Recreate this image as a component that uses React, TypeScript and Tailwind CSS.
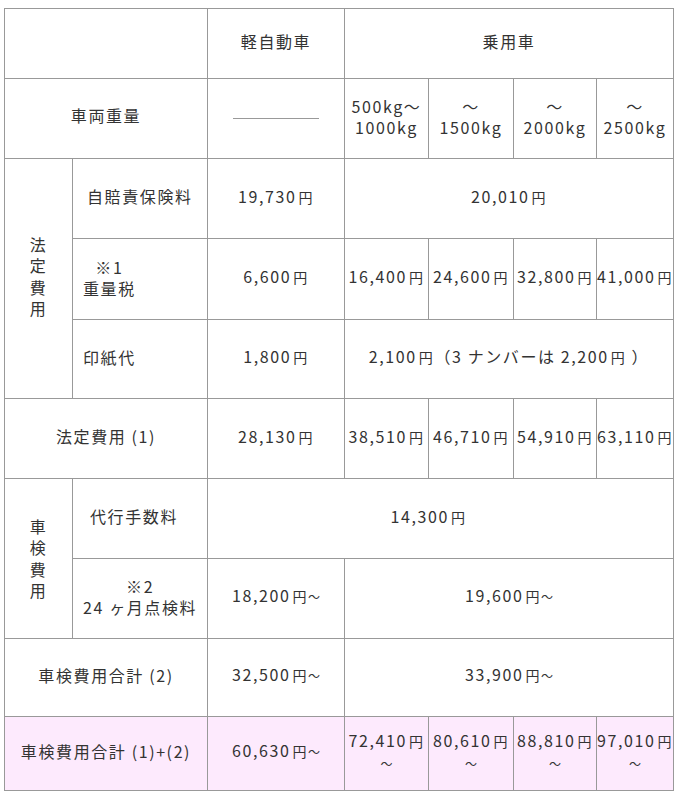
import React from "react";

const C = "bg-white flex items-center justify-center text-center pb-[5px]";
const C2 = "bg-white flex items-center justify-center text-center pb-[3px] leading-[21px]";
const P = "bg-[#fdeafd] flex items-center justify-center text-center pb-[5px]";
const P2 = "bg-[#fdeafd] flex items-center justify-center text-center pb-[3px] leading-[21px]";

function Yen() {
  return <span className="text-[14px] ml-[2px]">円</span>;
}

function Tilde() {
  return <span className="text-[12px] tracking-normal">～</span>;
}

function Vert({ text }: { text: string }) {
  return (
    <div className="flex flex-col items-center leading-[21.5px]">
      {text.split("").map((c, i) => (
        <span key={i}>{c}</span>
      ))}
    </div>
  );
}

export default function App() {
  return (
    <div className="w-[680px] h-[800px] bg-white pt-[8px] pl-[4px] font-['Noto_Sans_CJK_JP','Noto_Sans',sans-serif] text-[16px] tracking-[0.1em] text-[#333] leading-[22px]">
      <div className="grid w-[670px] grid-cols-[67px_134px_136px_83px_84px_82px_76px] grid-rows-[69px_79px_79px_80px_78px_79px_79px_79px_77px_73px] gap-px p-px bg-[#999]">
        {/* Row 1 */}
        <div className={`${C} col-span-2`}></div>
        <div className={C}><div>軽自動車</div></div>
        <div className={`${C} col-span-4`}><div>乗用車</div></div>

        {/* Row 2 */}
        <div className={`${C} col-span-2`}><div className="-mt-[3px]">車両重量</div></div>
        <div className="bg-white flex items-center justify-center">
          <div className="w-[86px] h-px bg-[#999]"></div>
        </div>
        <div className={C2}><div>500kg～<br />1000kg</div></div>
        <div className={C2}><div>～<br />1500kg</div></div>
        <div className={C2}><div>～<br />2000kg</div></div>
        <div className={C2}><div>～<br />2500kg</div></div>

        {/* Row 3-5 */}
        <div className="bg-white flex items-center justify-center row-span-3 pb-[4px]">
          <Vert text="法定費用" />
        </div>
        <div className="bg-white flex items-center pl-[14px] pb-[5px]"><div>自賠責保険料</div></div>
        <div className={C}><div>19,730<Yen /></div></div>
        <div className={`${C} col-span-4`}><div>20,010<Yen /></div></div>

        <div className="bg-white flex items-center pl-[10px] pb-[3px] leading-[21px]">
          <div className="text-center">※1<br />重量税</div>
        </div>
        <div className={C}><div>6,600<Yen /></div></div>
        <div className={`${C} whitespace-nowrap`}><div>16,400<Yen /></div></div>
        <div className={`${C} whitespace-nowrap`}><div>24,600<Yen /></div></div>
        <div className={`${C} whitespace-nowrap`}><div>32,800<Yen /></div></div>
        <div className={`${C} whitespace-nowrap`}><div>41,000<Yen /></div></div>

        <div className="bg-white flex items-center pl-[10px] pb-[5px]"><div>印紙代</div></div>
        <div className={C}><div>1,800<Yen /></div></div>
        <div className={`${C} col-span-4`}>
          <div>2,100<Yen />（3 ナンバーは 2,200<Yen /> ）</div>
        </div>

        {/* Row 6 */}
        <div className={`${C} col-span-2`}><div>法定費用 (1)</div></div>
        <div className={C}><div>28,130<Yen /></div></div>
        <div className={`${C} whitespace-nowrap`}><div>38,510<Yen /></div></div>
        <div className={`${C} whitespace-nowrap`}><div>46,710<Yen /></div></div>
        <div className={`${C} whitespace-nowrap`}><div>54,910<Yen /></div></div>
        <div className={`${C} whitespace-nowrap`}><div>63,110<Yen /></div></div>

        {/* Row 7-8 */}
        <div className="bg-white flex items-center justify-center row-span-2">
          <Vert text="車検費用" />
        </div>
        <div className="bg-white flex items-center pl-[17px] pb-[5px]"><div>代行手数料</div></div>
        <div className={`${C} col-span-5 pr-[24px]`}><div>14,300<Yen /></div></div>

        <div className="bg-white flex items-center pl-[10px] pb-[3px] leading-[21px]">
          <div className="text-center">※2<br />24 ヶ月点検料</div>
        </div>
        <div className={C}><div>18,200<Yen /><Tilde /></div></div>
        <div className={`${C} col-span-4`}><div>19,600<Yen /><Tilde /></div></div>

        {/* Row 9 */}
        <div className={`${C} col-span-2`}><div>車検費用合計 (2)</div></div>
        <div className={C}><div>32,500<Yen /><Tilde /></div></div>
        <div className={`${C} col-span-4`}><div>33,900<Yen /><Tilde /></div></div>

        {/* Row 10 */}
        <div className={`${P} col-span-2`}><div>車検費用合計 (1)+(2)</div></div>
        <div className={P}><div>60,630<Yen /><Tilde /></div></div>
        <div className={`${P2} whitespace-nowrap`}><div>72,410<Yen /><br /><Tilde /></div></div>
        <div className={`${P2} whitespace-nowrap`}><div>80,610<Yen /><br /><Tilde /></div></div>
        <div className={`${P2} whitespace-nowrap`}><div>88,810<Yen /><br /><Tilde /></div></div>
        <div className={`${P2} whitespace-nowrap`}><div>97,010<Yen /><br /><Tilde /></div></div>
      </div>
    </div>
  );
}
